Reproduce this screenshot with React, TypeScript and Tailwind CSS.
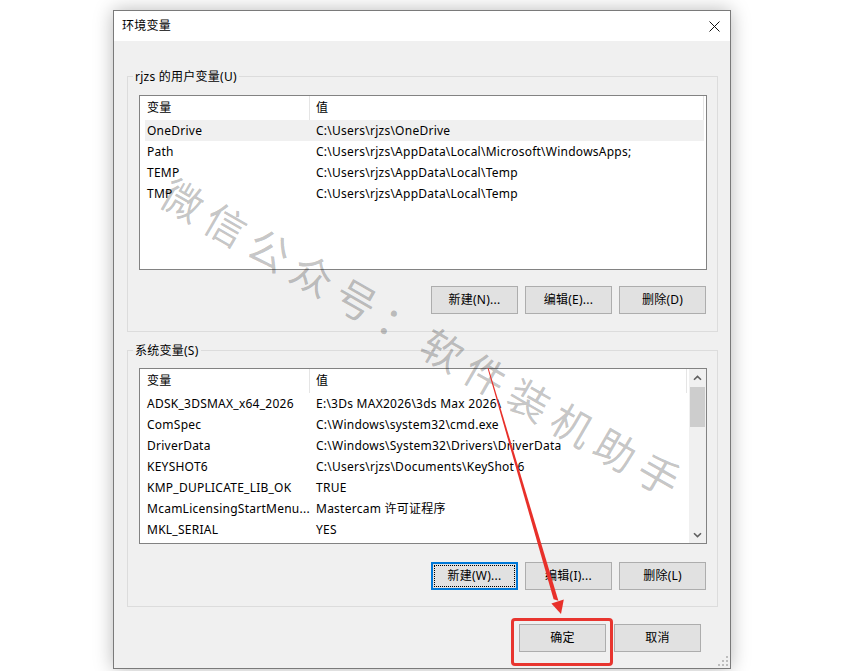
import { ReactNode } from "react";

const userVars = [
  ["OneDrive", "C:\\Users\\rjzs\\OneDrive"],
  ["Path", "C:\\Users\\rjzs\\AppData\\Local\\Microsoft\\WindowsApps;"],
  ["TEMP", "C:\\Users\\rjzs\\AppData\\Local\\Temp"],
  ["TMP", "C:\\Users\\rjzs\\AppData\\Local\\Temp"],
];

const sysVars = [
  ["ADSK_3DSMAX_x64_2026", "E:\\3Ds MAX2026\\3ds Max 2026\\"],
  ["ComSpec", "C:\\Windows\\system32\\cmd.exe"],
  ["DriverData", "C:\\Windows\\System32\\Drivers\\DriverData"],
  ["KEYSHOT6", "C:\\Users\\rjzs\\Documents\\KeyShot 6"],
  ["KMP_DUPLICATE_LIB_OK", "TRUE"],
  ["McamLicensingStartMenu...", "Mastercam 许可证程序"],
  ["MKL_SERIAL", "YES"],
];

function Btn({ label, focused }: { label: string; focused?: boolean }) {
  if (focused) {
    return (
      <button
        type="button"
        className="w-[87px] h-[28px] border-2 border-[#0078d7] bg-[#e1e1e1] p-px flex"
      >
        <span className="flex-1 border border-dotted border-black flex items-center justify-center">
          {label}
        </span>
      </button>
    );
  }
  return (
    <button
      type="button"
      className="w-[87px] h-[28px] border border-[#adadad] bg-[#e1e1e1] flex items-center justify-center"
    >
      {label}
    </button>
  );
}

function Chevron({ down }: { down?: boolean }) {
  return (
    <svg width="9" height="6" viewBox="0 0 9 6">
      <path
        d={down ? "M1 1.2 L4.5 4.6 L8 1.2" : "M1 4.8 L4.5 1.4 L8 4.8"}
        fill="none"
        stroke="#606060"
        strokeWidth="1.6"
      />
    </svg>
  );
}

function VarList({
  rows,
  scroll,
  height,
}: {
  rows: string[][];
  scroll?: boolean;
  height: string;
}) {
  return (
    <div className={`w-[568px] ${height} border border-[#828282] bg-white flex`}>
      <div className="flex-1 pl-[5px] pr-[2px] overflow-hidden">
        {/* Header */}
        <div className="h-[24px] flex leading-[24px]">
          <div className="w-[165px] pl-[2px] border-r border-[#e5e5e5]">变量</div>
          <div className="flex-1 pl-[6px] border-r border-[#e5e5e5]">值</div>
        </div>
        {rows.map(([name, value], i) => (
          <div
            key={name}
            className={`h-[21px] flex leading-[21px] whitespace-nowrap ${
              !scroll && i === 0 ? "bg-[#f0f0f0]" : ""
            }`}
          >
            <div className="w-[165px] pl-[2px] overflow-hidden">{name}</div>
            <div className="flex-1 pl-[6px] overflow-hidden">{value}</div>
          </div>
        ))}
      </div>
      {scroll && (
        <div className="w-[17px] bg-[#f0f0f0] flex flex-col">
          <div className="h-[17px] flex items-center justify-center">
            <Chevron />
          </div>
          <div className="h-[40px] mt-px mx-px bg-[#cdcdcd]" />
          <div className="flex-1" />
          <div className="h-[17px] flex items-center justify-center">
            <Chevron down />
          </div>
        </div>
      )}
    </div>
  );
}

function Group({
  label,
  className,
  children,
}: {
  label: string;
  className: string;
  children: ReactNode;
}) {
  return (
    <div className={`relative w-[591px] border border-[#dcdcdc] pl-[11px] ${className}`}>
      <span className="absolute left-[5px] -top-[9px] px-[2px] bg-[#f0f0f0] leading-[17px]">
        {label}
      </span>
      {children}
    </div>
  );
}

export default function App() {
  return (
    <div className="relative w-[845px] h-[671px] overflow-hidden bg-white pt-[10px] pl-[113px] font-['Noto_Sans','Noto_Sans_CJK_SC',sans-serif] text-[12px] tracking-[0.25px] text-black">
      {/* Dialog window */}
      <div className="relative w-[618px] h-[659px] border border-[#7a7a7a] bg-[#f0f0f0] shadow-[0_0_18px_rgba(0,0,0,0.28)] flex flex-col">
        {/* Title bar */}
        <div className="h-[30px] bg-white flex items-center justify-between pl-[8px] pr-[10px]">
          <span>环境变量</span>
          <svg width="11" height="11" viewBox="0 0 11 11">
            <path d="M0.5 0.5 L10.5 10.5 M10.5 0.5 L0.5 10.5" stroke="#111" strokeWidth="1" />
          </svg>
        </div>

        <div className="flex-1 flex flex-col pl-[13px]">
          <Group label="rjzs 的用户变量(U)" className="mt-[35px] pt-[18px] pb-[17px]">
            <VarList rows={userVars} height="h-[175px]" />
            <div className="w-[568px] mt-[16px] pr-px flex justify-end gap-[7px]">
              <Btn label="新建(N)..." />
              <Btn label="编辑(E)..." />
              <Btn label="删除(D)" />
            </div>
          </Group>

          <Group label="系统变量(S)" className="mt-[18px] pt-[17px] pb-[16px]">
            <VarList rows={sysVars} scroll height="h-[176px]" />
            <div className="w-[568px] mt-[18px] pr-px flex justify-end gap-[7px]">
              <Btn label="新建(W)..." focused />
              <Btn label="编辑(I)..." />
              <Btn label="删除(L)" />
            </div>
          </Group>

          <div className="mt-[17px] pr-[29px] flex justify-end gap-[8px]">
            <Btn label="确定" />
            <Btn label="取消" />
          </div>
        </div>

        {/* Resize grip */}
        <svg className="absolute right-[2px] bottom-[2px]" width="10" height="10" viewBox="0 0 10 10">
          <g fill="#bdbdbd">
            <rect x="8" y="0" width="2" height="2" />
            <rect x="4" y="4" width="2" height="2" />
            <rect x="8" y="4" width="2" height="2" />
            <rect x="0" y="8" width="2" height="2" />
            <rect x="4" y="8" width="2" height="2" />
            <rect x="8" y="8" width="2" height="2" />
          </g>
        </svg>
      </div>

      {/* Watermark */}
      <div className="absolute left-[166px] top-[160px] origin-[0_50%] rotate-[30deg] whitespace-nowrap text-[41px] leading-[56px] tracking-[9px] text-[rgba(0,0,0,0.24)] font-['Noto_Sans_CJK_SC',sans-serif] pointer-events-none">
        微信公众号：软件装机助手
      </div>

      {/* Red highlight and arrow */}
      <div className="absolute left-[511px] top-[618px] w-[102px] h-[48px] border-[3px] border-[#e8352f] rounded-[4px] pointer-events-none" />
      <svg className="absolute left-0 top-0 pointer-events-none" width="845" height="671" viewBox="0 0 845 671">
        <polygon
          points="487.5,368.1 488.5,367.9 558.4,600.7 553.6,599.3"
          fill="#e8302a"
        />
        <polygon points="561,614 563.8,599.6 551.4,603.4" fill="#e8302a" />
      </svg>
    </div>
  );
}
